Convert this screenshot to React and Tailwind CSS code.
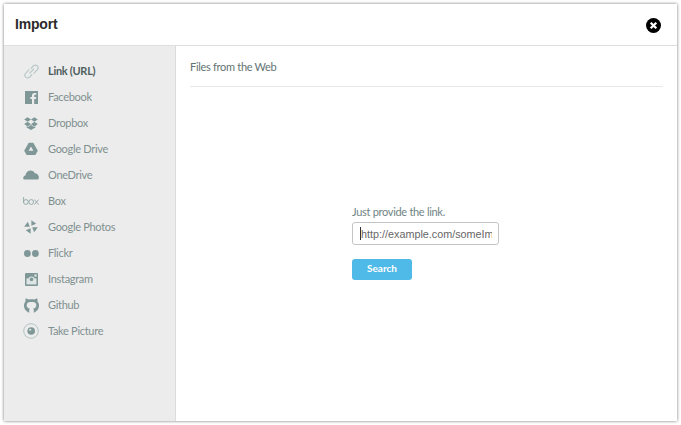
import React from "react";

const C = "#7f9797";
const Link = () => (
  <svg viewBox="0 0 16 16" width="15" height="15" fill="none" stroke="#b9c8c8" strokeWidth="1.3" strokeLinecap="round">
    <path d="M6.2 9.8 L10.2 5.6" />
    <path d="M7.6 4.6 L9.6 2.4 C11 1 13 1 14.2 2 C15.3 3.2 15.2 5.2 13.8 6.6 L10.8 9.8" />
    <path d="M8.4 11.4 L6.4 13.6 C5 15 3 15 1.8 14 C0.7 12.8 0.8 10.8 2.2 9.4 L5.2 6.2" />
  </svg>
);
const Facebook = () => (
  <svg viewBox="0 0 13 13" width="13" height="13">
    <path fill={C} d="M0 0 H13 V13 H9.2 V8 H11 L11.3 6 H9.2 V4.8 C9.2 4.1 9.5 3.8 10.2 3.8 H11.3 V2 H9.6 C7.8 2 7 3 7 4.6 V6 H5.4 V8 H7 V13 H0 Z" />
  </svg>
);
const Dropbox = () => (
  <svg viewBox="0 0 14 13" width="14" height="13" fill={C}>
    <path d="M3.6 0.2 L7 2.4 L3.6 4.8 L0.2 2.5 Z" />
    <path d="M10.4 0.2 L13.8 2.5 L10.4 4.8 L7 2.4 Z" />
    <path d="M3.6 4.8 L7 7.2 L3.6 9.4 L0.2 7.1 Z" />
    <path d="M10.4 4.8 L13.8 7.1 L10.4 9.4 L7 7.2 Z" />
    <path d="M7 7.9 L10.2 10 L11.4 9.3 V10.6 L7 13 L2.6 10.6 V9.3 L3.8 10 Z" />
  </svg>
);
const Drive = () => (
  <svg viewBox="0 0 16 16" width="14" height="14">
    <path fill={C} d="M5.4 0.8 H10.6 L15.8 10 L13 14.8 H3 L0.2 10 Z" />
    <path d="M8 5 L5.3 9.9 H10.7 Z" fill="#ececec" />
  </svg>
);
const Cloud = () => (
  <svg viewBox="0 0 16 10" width="16" height="10" fill={C}>
    <path d="M0.8 9.6 C-0.4 8 0.2 5.8 2.4 5.4 C3 2.2 5 0.4 7.6 0.4 C9.6 0.4 11 1.4 11.8 3.2 C14 3.2 15.9 5 15.9 7.2 C15.9 8.2 15.6 9 15.2 9.6 Z" />
  </svg>
);
const BoxLogo = () => (
  <svg viewBox="0 0 16 8" width="16" height="8" fill="none" stroke="#8fa5a5" strokeWidth="0.9">
    <path d="M0.6 0 V5" />
    <circle cx="2.9" cy="5" r="2.4" />
    <circle cx="8.2" cy="5" r="2.4" />
    <path d="M11.4 2.6 L15.6 7.6 M15.6 2.6 L11.4 7.6" />
  </svg>
);
const blade = "M8.4 6.6 L8.4 0.2 L14 4.4 Z";
const Photos = () => (
  <svg viewBox="0 0 16 16" width="14" height="14" fill={C}>
    <path d={blade} />
    <path d={blade} transform="rotate(90 8 8)" />
    <path d={blade} transform="rotate(180 8 8)" />
    <path d={blade} transform="rotate(270 8 8)" />
  </svg>
);
const Flickr = () => (
  <svg viewBox="0 0 15 7" width="15" height="7" fill={C}>
    <circle cx="3.4" cy="3.5" r="3.4" />
    <circle cx="11.4" cy="3.5" r="3.4" />
  </svg>
);
const Instagram = () => (
  <svg viewBox="0 0 13 13" width="13" height="13">
    <rect width="13" height="13" rx="1" fill={C} />
    <rect x="1.5" y="5.4" width="10" height="6" fill="#dfe5e5" />
    <circle cx="6.5" cy="6.4" r="3" fill="#dfe5e5" />
    <circle cx="6.5" cy="6.4" r="1.8" fill={C} />
    <rect x="9.4" y="1.4" width="2.2" height="2.2" fill="#dfe5e5" />
  </svg>
);
const Github = () => (
  <svg viewBox="0 0 15 15" width="15" height="15" fill={C}>
    <path d="M5.2 14.7 C2.2 13.8 0 11 0 7.6 C0 5.8 0.6 4.4 1.6 3.3 C1.4 2.6 1.3 1.5 1.8 0.4 C3 0.4 4 1 4.8 1.6 C5.6 1.4 6.6 1.2 7.5 1.2 C8.4 1.2 9.4 1.4 10.2 1.6 C11 1 12 0.4 13.2 0.4 C13.7 1.5 13.6 2.6 13.4 3.3 C14.4 4.4 15 5.8 15 7.6 C15 11 12.8 13.8 9.8 14.7 V12.2 C9.8 11.4 9.6 10.9 9.2 10.5 C11.2 10.2 12.3 9.2 12.3 7.2 C12.3 6.2 12 5.4 11.3 4.8 C11 4.5 10.2 3.9 7.5 3.9 C4.8 3.9 4 4.5 3.7 4.8 C3 5.4 2.7 6.2 2.7 7.2 C2.7 9.2 3.8 10.2 5.8 10.5 C5.4 10.9 5.2 11.4 5.2 12.2 Z" />
  </svg>
);
const Camera = () => (
  <svg viewBox="0 0 16 16" width="16" height="16" fill="none">
    <circle cx="8" cy="8" r="7.3" stroke="#b2c3c3" strokeWidth="1" />
    <circle cx="8.2" cy="8" r="3.8" fill={C} />
    <circle cx="7.2" cy="6.8" r="1" fill="#ececec" />
  </svg>
);

const items = [
  ["Link (URL)", <Link />],
  ["Facebook", <Facebook />],
  ["Dropbox", <Dropbox />],
  ["Google Drive", <Drive />],
  ["OneDrive", <Cloud />],
  ["Box", <BoxLogo />],
  ["Google Photos", <Photos />],
  ["Flickr", <Flickr />],
  ["Instagram", <Instagram />],
  ["Github", <Github />],
  ["Take Picture", <Camera />],
];

export default function App() {
  return (
    <div className="w-[681px] h-[425px] bg-white p-[4px] font-['Lato',sans-serif]">
      <div className="h-full flex flex-col bg-white shadow-[0_0_3px_rgba(0,0,0,0.55)]">
        <header className="h-[42px] shrink-0 flex items-center justify-between pl-[11px] pr-[16px] border-b border-[#dfdfdf]">
          <h1 className="text-[14px] font-bold tracking-[-0.2px] text-[#2b2b2b] font-['Liberation_Sans',sans-serif]">Import</h1>
          <svg viewBox="0 0 16 16" width="15" height="15" className="mt-[1px]">
            <circle cx="8" cy="8" r="8" fill="#000" />
            <path d="M5 5 L11 11 M11 5 L5 11" stroke="#fff" strokeWidth="2.4" />
          </svg>
        </header>
        <div className="flex-1 flex min-h-0">
          <aside className="w-[172px] shrink-0 bg-[#ececec] border-r border-[#dcdcdc] pt-[12px] pl-[19px]">
            {items.map(([label, icon], i) => (
              <div key={label} className="h-[26px] flex items-center">
                <span className="w-[16px] flex items-center justify-center shrink-0">{icon}</span>
                <span className={i === 0 ? "ml-[9px] text-[11px] tracking-[-0.3px] font-bold text-[#4f5f5f]" : "ml-[9px] text-[11px] tracking-[-0.3px] text-[#7f9090]"}>
                  {label}
                </span>
              </div>
            ))}
          </aside>
          <main className="flex-1 flex flex-col px-[14px]">
            <div className="h-[41px] shrink-0 flex items-center pt-[3px] border-b border-[#e8e8e8] text-[11px] tracking-[-0.3px] text-[#5f7373]">
              Files from the Web
            </div>
            <div className="flex-1 pt-[118px] pl-[162px] flex flex-col items-start">
              <label className="text-[11px] tracking-[-0.3px] text-[#6f8484] leading-[14px]">Just provide the link.</label>
              <div className="relative mt-[3px]">
                <input
                  readOnly
                  value="http://example.com/someImage.jpg"
                  className="block w-[147px] h-[23px] rounded-[3px] border border-[#c4c4c4] pl-[8px] pr-[6px] text-[10.8px] text-[#666] font-['Liberation_Sans',sans-serif] outline-none"
                />
                <span className="absolute left-[8px] top-[5px] w-px h-[13px] bg-[#333]"></span>
              </div>
              <button className="mt-[14px] w-[60px] h-[21px] rounded-[3px] bg-[#4fb9e8] text-white text-[10px] font-bold pb-[3px]">Search</button>
            </div>
          </main>
        </div>
      </div>
    </div>
  );
}
